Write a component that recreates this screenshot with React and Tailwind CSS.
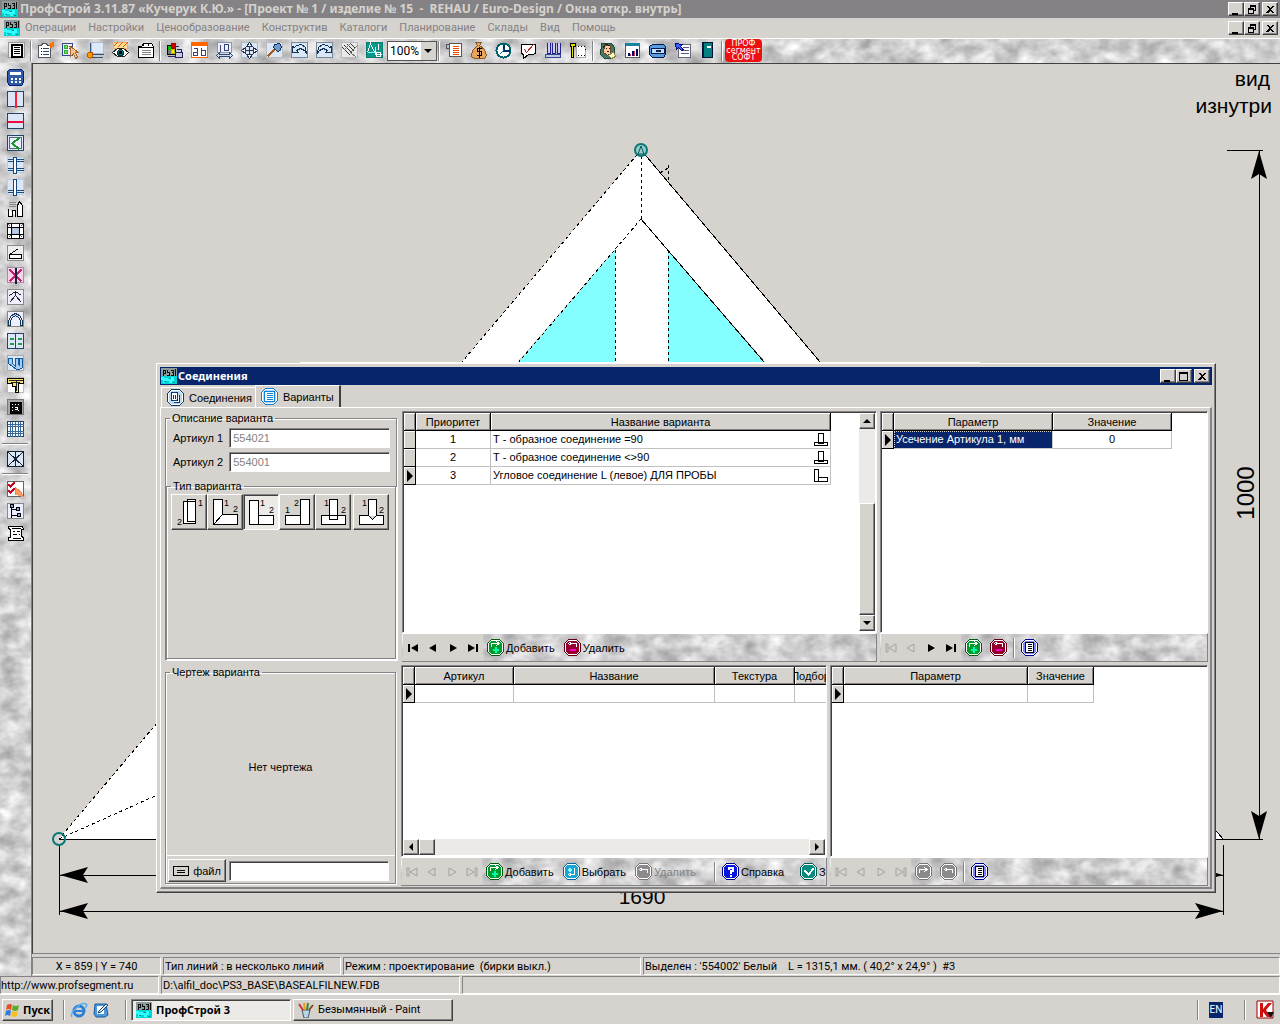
import React, { useState } from 'react';

const BOLD = 'font-bold font-["Noto_Sans","Open_Sans",sans-serif]';
const RAISED = 'border border-t-white border-l-white border-r-[#404040] border-b-[#404040] shadow-[inset_-1px_-1px_0_#848284] bg-[#d6d3ce]';
const SUNKEN = 'border border-t-[#848284] border-l-[#848284] border-r-white border-b-white shadow-[inset_1px_1px_0_#404040]';
const THIN = 'border border-t-[#848284] border-l-[#848284] border-r-white border-b-white';

const Ico = ({ children }) => (
    <svg viewBox="0 0 17 17" className="size-[17px] shrink-0" shapeRendering="crispEdges" aria-hidden="true">
        <g transform="translate(.5 .5)">{children}</g>
    </svg>
);

const P = ({ d, c = '#000', f = 'none', w = 1 }) => <path d={d} stroke={c} fill={f} strokeWidth={w} />;
const Box = ({ c = '#6b7fa3', f = '#dbe6f6' }) => <rect x="0" y="0" width="16" height="15" fill={f} stroke={c} />;

// Grey marble behind every toolbar
const Marble = () => (
    <svg className="absolute inset-0 w-full h-full pointer-events-none" aria-hidden="true">
        <rect width="100%" height="100%" filter="url(#marble)" />
    </svg>
);

const AppIcon = () => (
    <svg viewBox="0 0 16 16" className="size-4 shrink-0" shapeRendering="crispEdges" aria-hidden="true">
        <path d="M0 0h16v16H0z" fill="#00d5d5" />
        <path d="M0 0h16v8H0z" fill="#8c9c9c" />
        <path d="M2 8V2h2v3H2M7 2H6v2h2v3H6M10 2h2v2h-1M12 4v3h-2M14 1v7" stroke="#111" fill="none" />
        <path d="M0 9h3v1h4v1h3v-2h3v4h-2v2H8v-2H4v2H2v-3H0z" fill="#30ffff" />
        <path d="M3 13h2M8 10h2M12 14h2" stroke="#089090" />
    </svg>
);

const TOOLBAR = [
    { name: 'Меню', icon: <><Box c="#999" f="#eee" /><P d="M3 2h10v12H3z" f="#fff" w={2} /><P d="M5 5h6M5 7h6M5 9h6M5 11h6" /></> },
    null,
    { name: 'Свойства', icon: <><P d="M1 3h3l1-2h4l1 2h3v12H1z" c="#556" f="#fff" /><P d="M5 6h6M5 9h6M5 12h6" c="#346" /><P d="M3 6h1M3 9h1M3 12h1" /><P d="M13 1l3-1v4l-3 1z" c="#f60" f="#f80" /></> },
    { name: 'Выбор', icon: <><P d="M0 1h10v12H0z" c="#348" f="#eef" /><P d="M2 3h3v3H2zM2 8h3v3H2z" c="#3a3" f="#6d6" /><P d="M6 4h3M6 6h3" c="#348" /><P d="M8 4v10l3-3 2 5 2-1-2-5h3z" c="#a63" f="#ffc488" /></> },
    { name: 'Размеры', icon: <><P d="M4 0h12v11H4z" c="#abc" f="#dde8fa" /><P d="M3 0v12h13M5 12v3h10" c="#357" /><P d="M1 10h4v4l-2 2-3-2v-3z" c="#b50" f="#f90" /></> },
    { name: 'Просмотр', icon: <><P d="M1 0h14v6H1z" c="#fa6" f="#fd9" /><P d="M1 4l4-4M5 5l5-5M10 5l5-5" c="#d50" /><P d="M0 10l5-4h6l5 4-4 4H5z" c="#222" f="#fff" /><circle cx="8" cy="10" r="3" fill="#087070" stroke="#033" /><P d="M7 9h2v2H7z" f="#000" /></> },
    { name: 'Заметка', icon: <><P d="M1 4h3l2-3h8l2 3v11H1zM1 5h15M5 4l2-3M10 4l2-3" f="#fff" /><P d="M4 8h9M4 10h9M4 12h9" c="#888" /></> },
    null,
    { name: 'Цвета', icon: <><P d="M1 3h8v9H1z" f="#777" /><P d="M2 4h3v3H2z" c="#0b0" f="#0c0" /><P d="M5 1h4v5H5z" c="#a00" f="#c00" /><P d="M5 7h3v4H5z" c="#bb0" f="#ee0" /><P d="M9 4h3M9 10h7v5H9zM10 7h5v3M1 14h7" c="#226" f="#ccd" /></> },
    { name: 'Текст', icon: <><Box c="#f60" f="#fff" /><P d="M0 2h16" c="#f60" w={3} /><P d="M2 6h4v7H2v-3h4M10 5v8h4V8h-4" c="#347" /></> },
    { name: 'Число', icon: <><P d="M1 0h14v10H1z" c="#89a" f="#eef" /><P d="M4 2v7M8 2h4v6H8z" c="#347" /><P d="M0 13l3-3v2h10v-2l3 3-3 3v-2H3v2z" c="#347" f="#cde" /></> },
    { name: 'Переместить', icon: <><Box c="#abb" /><P d="M8 3v10M3 8h10" c="#235" /><P d="M8 0l3 4H5zM8 16l3-4H5zM0 8l4-3v6zM16 8l-4-3v6z" c="#235" f="#fff" /></> },
    { name: 'Кисть', icon: <><Box c="#bbb" /><P d="M1 14l8-8" c="#a75b18" w={2} /><P d="M8 2l5-1 2 3-1 4-3 1-4-4z" c="#036" f="#7399c8" /></> },
    { name: 'Отменить', icon: <><Box c="#789" /><P d="M1 4v6h6L5 8l4-2 4 2 2 3-1-6-4-3-5 1-2 2z" c="#135" f="#d6e8fa" /></> },
    { name: 'Вернуть', icon: <><Box c="#789" /><P d="M15 4v6H9l2-2-4-2-4 2-2 3 1-6 4-3 5 1 2 2z" c="#135" f="#d6e8fa" /></> },
    { name: 'Сетка', icon: <><Box c="#bbb" f="#e8e8e8" /><P d="M1 5l8 8M3 3l8 8M6 2l7 7M9 1l5 5" c="#333" /><P d="M2 8l7-7M9 10l7-7M9 10l6 5" c="#777" /></> },
    { name: 'Масштаб', icon: <><Box c="#087a70" f="#07988a" /><P d="M1 10l3-9 4 9M9 4v8h6M12 1v6M10 10h4v4h-4z" c="#fff" /><P d="M1 10h7" c="#8ff" /></> },
    'zoom',
    null,
    { name: 'Спецификация', icon: <><P d="M0 2h4v12h12V1H4v1" c="#555" f="#fff" /><P d="M1 2v4h3" c="#555" /><P d="M7 4h6M7 6h6M7 8h6M7 10h6M7 12h6" c="#e64c00" /></> },
    { name: 'Стоимость', icon: <><P d="M5 0l2 3-5 5-1 6 3 2h10l2-3-2-6-5-4 2-3z" c="#87592a" f="#e7a55a" /><P d="M11 6H7v3h4v4H6M9 4v11" /></> },
    { name: 'Время', icon: <><circle cx="8" cy="8" r="7" fill="#fff" stroke="#00616b" strokeWidth="2" /><P d="M8 2v6h6" c="#036" w={2} /><P d="M8 8l-4 4" c="#089" /></> },
    { name: 'Проверка', icon: <><P d="M1 2h14v9l-3 1H8l-5 4V12l-2-1z" f="#fff" /><P d="M4 7l2 3 7-8" c="#b22" /></> },
    { name: 'Раскрой', icon: <><P d="M0 12h15v3H0z" c="#349" f="#bcd" /><P d="M2 0v11h3V0M7 0v11h3V0M12 0v11h3V0" c="#228" f="#ccf" /></> },
    { name: 'План', icon: <><P d="M6 3h9v12H6z" c="#aaa" f="#fff" /><P d="M0 1h5v3H3v11H1V4H0z" f="#dede00" /><P d="M7 4h1M10 4h1M13 4h1M14 7h1M13 13h1M10 13h1M7 13h1" /></> },
    null,
    { name: 'Клиент', icon: <><P d="M2 1h10l3 4v9l-4 2H5l-4-4z" c="#243" f="#476" /><P d="M5 3h6v8l-3 2-4-3z" c="#643" f="#ffc99b" /><P d="M3 6l3-4 5 1M6 6h1M9 6h1M7 9h2" c="#221" /><P d="M9 13l5-4 2 5-4 2z" c="#884" f="#ffc" /></> },
    { name: 'Диаграмма', icon: <><P d="M1 1h14v14H1z" c="#555" f="#fff" /><P d="M1 2h14" c="#1684a0" w={3} /><P d="M4 13v-3M8 13V8M12 13V6" c="#00006a" w={2} /><P d="M6 13v-2M10 13V8" c="#d33" /></> },
    { name: 'Печать', icon: <><P d="M3 2h11l2 2v8l-2 3H3l-3-3V4z" c="#001b50" f="#5b9be0" /><P d="M2 6h13v5H2z" c="#001b50" f="#c0e0ff" /><P d="M6 8h5" c="#124" w={2} /></> },
    { name: 'Отчёт', icon: <><P d="M4 2h12v13H4z" c="#667" f="#fff" /><P d="M8 5h6M6 8h8M6 11h8" c="#558" /><P d="M1 1l7 1-2 2 3 3-2 1-3-3-2 2z" c="#008" f="#36f" /></> },
    { name: 'Справочник', icon: <><P d="M3 0h10v15H3z" c="#013" f="#008080" /><P d="M7 4h4" c="#fff" w={2} /><P d="M4 0v15" c="#023" /></> },
    null,
];

const SIDEBAR = [
    { name: 'Калькулятор', icon: <><P d="M2 0h12l2 2v11l-2 3H2l-2-3V2z" c="#002080" f="#315aa8" /><P d="M3 3h10v2H3z" c="#fff" f="#fff" /><P d="M3 9h2M7 9h2M11 9h2M3 12h2M7 12h2M11 12h2" c="#fff" w={2} /></> },
    { name: 'Вертикаль', icon: <><Box c="#246" /><path d="M7 0h2v16H7z" fill="#ff2038" /></> },
    { name: 'Горизонталь', icon: <><Box c="#246" /><path d="M0 7h16v2H0z" fill="#f00840" /></> },
    { name: 'Створка', icon: <><Box c="#246" /><P d="M2 2h12v11H2z" c="#567" f="#eef" /><P d="M12 2L5 8l7 6" c="#17992a" w={2} /></> },
    { name: 'Импост', icon: <><Box c="#bcd" /><P d="M0 2h16M0 4h16M0 11h16M0 13h16" c="#174a80" /><P d="M6 0h3v16H6z" c="#174a80" f="#fff" /></> },
    { name: 'Штульп', icon: <><Box c="#bcd" /><P d="M0 11h16M0 13h16" c="#174a80" /><P d="M6 0h3v16H6z" c="#174a80" f="#fff" /></> },
    { name: 'Арка', icon: <><P d="M1 1h7M1 3h7M1 5h7" c="#888" /><P d="M1 7v8h4V9h3v6M10 15V4l2-4 3 4v11z" f="#fff" /></> },
    { name: 'Рама', icon: <><Box c="#111" f="#fff" /><P d="M4 0v15M12 0v15M0 4h16M0 11h16" /><P d="M1 1l2 2M15 1l-2 2M1 14l2-2M15 14l-2-2" c="#666" /><P d="M5 5h6v5H5z" c="#abd" f="#bcd" /></> },
    { name: 'Наклон', icon: <><Box c="#888" f="#eee" /><P d="M2 9v4h12V9z" f="#fff" /><P d="M2 9l9-6" /></> },
    { name: 'Удалить импост', icon: <><Box c="#a8a" f="#f4d4e6" /><P d="M2 2l12 12M14 2L2 14" c="#c02078" w={2} /><P d="M8 0v16" c="#123" w={2} /></> },
    { name: 'Угол', icon: <><Box c="#888" f="#eef" /><P d="M2 13l6-7 6 7M2 6l6-4 6 4M8 2v4" c="#222" /></> },
    { name: 'Дуга', icon: <><Box c="#888" f="#eef" /><P d="M1 14V9l3-5 4-2 4 2 3 5v5h-2V9l-2-3-3-2-3 2-2 3v5z" c="#135" f="#dbe6f6" /></> },
    { name: 'Заполнение', icon: <><Box c="#246" /><P d="M8 0v15" c="#246" /><P d="M2 5h4M10 5h4M2 10h4M10 10h4" c="#289848" w={2} /></> },
    { name: 'Профили', icon: <><Box c="#aaa" /><P d="M1 3h4v5l3 3V3h3v5l1 2V3h3v9l-3 2H9L1 8z" c="#135a98" f="#a8ccf0" /></> },
    { name: 'Сечение', icon: <><Box c="#bbb" f="#fff" /><P d="M0 1h16v5h-5v9H8V9H5V6H0z" f="#f8e070" /><P d="M1 3h14M3 5h9M9 3v10" c="#222" /></> },
    { name: 'Растр', icon: <><Box c="#777" f="#a8a8a8" /><P d="M3 3h10v10H3z" f="#111" w={2} /><P d="M4 5h1M7 5h1M10 5h1M4 8h1M10 11h1M7 8h3v2H7M4 11h1" c="#fff" /></> },
    { name: 'Раскладка', icon: <><Box c="#246" f="#fff" /><P d="M0 3h16M0 5h16M0 10h16M0 12h16M3 0v15M5 0v15M8 0v15M11 0v15M13 0v15" c="#3a6a9c" /></> },
    null,
    { name: 'Диагонали', icon: <><Box c="#123" /><P d="M0 0l16 15M16 0L0 15M8 0v15" c="#123" /></> },
    null,
    { name: 'Список', icon: <><Box c="#666" f="#fff" /><P d="M1 3l2 2 4-4M1 9l2 2 4-4" c="#c02" w={2} /><P d="M8 13V6l6 5 2 5" c="#e84" f="#f96" /></> },
    { name: 'Дерево', icon: <><Box c="#888" f="#eef" /><P d="M4 3v11M4 6h5M4 12h6" /><P d="M3 1h3v3H3zM9 4h3v3H9zM10 10h3v3h-3z" f="#8ac" /></> },
    { name: 'Сценарий', icon: <><P d="M1 1h14l1 3h-2v7l2 1v3H1v-3h2V4L1 3z" f="#fff" /><P d="M5 6h2M9 6h3M5 9h4M11 9h1M4 3h9M5 13h8" /></> },
];

const MENU = ['Операции', 'Настройки', 'Ценообразование', 'Конструктив', 'Каталоги', 'Планирование', 'Склады', 'Вид', 'Помощь'];

const CAPTION = {
    min: 'M3 10h6v2H3z',
    restore: 'M5 2h6v6H9v3H3V5h2zM6 4v1h3v2h1V4zM4 7v3h4V7z',
    max: 'M2 2h9v9H2zM3 4v6h7V4z',
    close: 'M3 3h2l2 2 2-2h2L8 6l3 4H9L7 8l-2 2H3l3-4z',
};

const CaptionButtons = ({ kinds }) => (
    <div className="flex items-center ml-auto">
        {kinds.map((kind) => (
            <button key={kind} aria-label={kind} className={`w-4 h-[14px] flex items-center justify-center last:ml-[2px] ${RAISED}`}>
                <svg viewBox="0 0 14 13" className="w-[14px] h-[13px]" shapeRendering="crispEdges"><path d={CAPTION[kind]} fillRule="evenodd" /></svg>
            </button>
        ))}
    </div>
);

const Sep = () => <span className="w-[2px] h-5 mx-[2px] shrink-0 border-l border-l-[#848284] border-r border-r-white" />;

const Toolbar = () => (
    <div className="relative h-[25px] overflow-hidden border-t border-white">
        <Marble />
        <div className="relative flex items-center h-[23px] pl-1">
            {TOOLBAR.map((item, i) => {
                if (item === null) return <span key={i} className="w-[2px] h-5 mx-[1px] shrink-0 border-l border-l-[#848284] border-r border-r-white" />;
                if (item === 'zoom') {
                    return (
                        <select key={i} aria-label="Масштаб" className="appearance-none w-[50px] h-5 shrink-0 pl-[2px] text-[12px] leading-[16px] bg-white border border-[#555] bg-no-repeat bg-right bg-[linear-gradient(#d6d3ce,#d6d3ce)] bg-[length:15px_18px] text-black">
                            <option>100%</option>
                        </select>
                    );
                }
                return (
                    <button key={i} title={item.name} className="w-[25px] h-[22px] shrink-0 flex items-center justify-center">
                        <Ico>{item.icon}</Ico>
                    </button>
                );
            })}
            <div className="ml-[1px] w-[37px] h-[23px] rounded-[4px] bg-[#ee1010] text-white text-[8px] leading-[7px] text-center flex flex-col justify-center shrink-0 font-['DejaVu_Sans',sans-serif]">
                <span>ПРОФ</span><span>сегмент</span><span>СОФТ</span>
            </div>
        </div>
        <svg viewBox="0 0 8 4" className="absolute left-[424px] top-[10px] w-2 h-1 pointer-events-none"><path d="M0 0h8L4 4z" /></svg>
    </div>
);

const Drawing = () => (
    <svg viewBox="33 64 1247 800" preserveAspectRatio="xMinYMin meet" className="absolute inset-0 w-full h-full font-['Liberation_Sans',sans-serif]">
        <g shapeRendering="crispEdges" strokeWidth="1" stroke="#000" fill="none">
            <path d="M641 150L59 839H1223z M641 219L225 700H1060z" fill="#fff" stroke="none" fillRule="evenodd" />
            <path d="M615 219h53v150h-53z" fill="#fff" stroke="none" />
            <path d="M615 250V370H512zM668 250V370H771z" fill="#84ffff" stroke="none" />
            <path d="M641 150L59 839M641 219L512 370M641 150V219M615 250V370M668 250V370M59 839L155 796M668 165V182M660 173L668 168" strokeDasharray="3 3" />
            <path d="M641 150L1223 839M641 219L771 370M59 839H1223" />
            <path d="M59 845V915M1223 845V915M1227 150H1263M1223 839H1263M60 875H1223M60 911H1223M1259 150V839" />
            <path d="M300 362H980" stroke="#fff" />
        </g>
        <path d="M60 875l28-8-5 8 5 8zM1223 875l-28-8 5 8-5 8zM60 911l28-8-5 8 5 8zM1223 911l-28-8 5 8-5 8zM1259 151l-8 28 8-5 8 5zM1259 839l-8-28 8 5 8-5z" />
        <circle cx="59" cy="839" r="6" fill="none" stroke="#087878" strokeWidth="2" />
        <circle cx="641" cy="150" r="6" fill="#9cc" stroke="#087878" strokeWidth="2" />
        <path d="M638 154l3-8 3 8z" fill="none" stroke="#055" />
        <text x="1270" y="86" textAnchor="end" fontSize="21">вид</text>
        <text x="1272" y="113" textAnchor="end" fontSize="21">изнутри</text>
        <text x="642" y="904" textAnchor="middle" fontSize="21">1690</text>
        <text transform="translate(1254 493) rotate(-90)" textAnchor="middle" fontSize="24">1000</text>
    </svg>
);

// Small drawings of the profile joints, first and second article numbered
const JOINTS = [
    { d: 'M11 6h12v22H11zM15 4h8v22h-8z', one: [26, 11], two: [5, 30] },
    { d: 'M5 4h9v15h15v10H5zM5 29l9-10', one: [16, 11], two: [25, 17] },
    { d: 'M5 5h9v24H5zM14 20h15v9H14z', one: [16, 11], two: [25, 18] },
    { d: 'M20 4h9v25h-9zM5 20h15v9H5z', one: [5, 18], two: [14, 11] },
    { d: 'M5 20h24v9H5zM13 4h8v20h-8z', one: [8, 11], two: [25, 18] },
    { d: 'M5 20h9V4h8v16h7v9H5zM14 20l4 4 4-4', one: [8, 11], two: [25, 18] },
];

const NavButton = ({ kind, off }) => {
    const shapes = {
        first: 'M1 1h2v8H1zM11 1v8L4 5z',
        prev: 'M9 1v8L2 5z',
        next: 'M3 1v8l7-4z',
        last: 'M1 1v8l7-4zM9 1h2v8H9z',
    };
    return (
        <button aria-label={kind} disabled={off} className="w-5 h-[27px] shrink-0 flex items-center justify-center bg-[#d6d3ce]">
            <svg viewBox="0 0 12 10" className="w-3 h-[10px]">
                <path d={shapes[kind]} fill={off ? '#d6d3ce' : '#000'} stroke={off ? '#a5a29c' : 'none'} />
            </svg>
        </button>
    );
};

const BADGES = {
    add: { fill: '#009c29', edge: '#005a10', mark: <><P d="M4 7V4h7M9 2l3 2-3 2" c="#fff" /><P d="M8 7v6M5 10h6" c="#00ffb0" w={2} /></> },
    del: { fill: '#94002c', edge: '#5a0010', mark: <><P d="M12 7V4H5M7 2L4 4l3 2" c="#fff" /><P d="M6 10h5v1H6z" c="#f0c" f="#f0c" /></> },
    pick: { fill: '#18a5d6', edge: '#006a9c', mark: <><P d="M11 4v7H6M8 9l-3 2 3 2" c="#fff" /><P d="M6 4v4M4 6h4" c="#8ff" w={2} /></> },
    delOff: { fill: '#8c8a8c', edge: '#777', mark: <P d="M12 9V6H5M7 4L4 6l3 2" c="#fff" /> },
    addOff: { fill: '#8c8a8c', edge: '#777', mark: <P d="M4 9V6h7M9 4l3 2-3 2" c="#fff" /> },
    help: { fill: '#0818de', edge: '#000084', mark: <P d="M6 6V4h4v3H8v3M8 11v2" c="#fff" w={2} /> },
    ok: { fill: '#088c80', edge: '#005a52', mark: <P d="M4 7l4 4 5-6" c="#fff" w={2} /> },
    list: { fill: '#7b84ff', edge: '#000094', mark: <><P d="M4 3h8v10H4z" f="#fff" /><P d="M6 5h4M6 7h4M6 9h4M6 11h4" /></> },
    joint: { fill: '#bdd6ef', edge: '#083c73', mark: <><P d="M4 3h6v8H4zM6 13h6V5" c="#083c73" f="#fff" /><P d="M6 5v4M8 5v4" c="#083c73" /></> },
    variant: { fill: '#a8dcff', edge: '#1080d6', mark: <><P d="M3 3h10v10H3z" c="#1080d6" f="#fff" /><P d="M5 5h6M5 7h6M5 9h6M5 11h6" c="#1080d6" /></> },
};

const Badge = ({ kind }) => {
    const { fill, edge, mark } = BADGES[kind];
    return (
        <Ico>
            <path d="M4 0h8l4 4v8l-4 4H4l-4-4V4z" fill="#fff" stroke={edge} />
            <path d="M4 2h8l2 2v8l-2 2H4l-2-2V4z" fill={fill} stroke={fill} />
            {mark}
        </Ico>
    );
};

const BadgeButton = ({ kind, label, off }) => (
    <button aria-label={label || kind} disabled={off} className={`h-6 shrink-0 flex items-center gap-[2px] whitespace-nowrap ${off ? 'text-[#848284]' : ''}`}>
        <Badge kind={kind} />{label}
    </button>
);

const PanelBar = ({ children }) => (
    <div className="relative h-[29px] shrink-0 overflow-hidden border-t border-t-white border-b border-b-[#848284] border-r border-r-[#848284]">
        <Marble />
        <div className="relative flex items-center h-full pl-[1px]">{children}</div>
    </div>
);

const Th = ({ children }) => (
    <th className="h-[18px] p-0 font-normal bg-[#d6d3ce] border-r border-b border-black shadow-[inset_1px_1px_0_#fff,inset_-1px_-1px_0_#848284]">
        <div className="flex justify-center overflow-hidden whitespace-nowrap">{children}</div>
    </th>
);

const Mark = ({ current }) => (
    <td className="h-[18px] p-0 bg-[#d6d3ce] border-r border-b border-black shadow-[inset_1px_1px_0_#fff]">
        {current && <svg viewBox="0 0 6 12" className="w-[6px] h-3 ml-[3px]"><path d="M0 0l6 6-6 6z" /></svg>}
    </td>
);

const CELL = 'h-[18px] p-0 leading-[17px] border-r border-b border-[#c0c0c0] whitespace-nowrap';

const Grid = ({ cols, width, head, children }) => (
    <table className={`table-fixed border-separate border-spacing-0 shrink-0 self-start ${width}`}>
        <colgroup>{cols.map((c, i) => <col key={i} className={c} />)}</colgroup>
        <thead><tr><Th />{head.map((h) => <Th key={h}>{h}</Th>)}</tr></thead>
        <tbody>{children}</tbody>
    </table>
);

const ScrollArrow = ({ dir }) => {
    const d = { up: 'M0 6h8L4 2z', down: 'M0 2h8L4 6z', left: 'M6 0v8L2 4z', right: 'M2 0v8l4-4z' }[dir];
    return (
        <button aria-label={dir} className={`size-4 shrink-0 flex items-center justify-center ${RAISED}`}>
            <svg viewBox="0 0 8 8" className="size-2"><path d={d} /></svg>
        </button>
    );
};

const JointMini = ({ corner }) => (
    <svg viewBox="0 0 16 16" className="size-4 shrink-0" shapeRendering="crispEdges">
        <path transform="translate(.5 .5)" d={corner ? 'M1 1h4v12H1zM5 9h9v4H5z' : 'M1 10h13v3H1zM5 1h5v10H5z'} fill="#fff" stroke="#000" />
    </svg>
);

const VARIANTS = [
    { id: 1, name: 'Т - образное соединение =90' },
    { id: 2, name: 'Т - образное соединение <>90' },
    { id: 3, name: 'Угловое соединение L (левое) ДЛЯ ПРОБЫ', corner: true },
];

const GROUP = 'border border-[#848284] shadow-[1px_1px_0_#fff,inset_1px_1px_0_#fff] min-w-0';
const FIELD = `flex-1 min-w-0 h-5 px-[3px] bg-white text-[#848284] ${SUNKEN}`;

const ConnectionsDialog = () => {
    const [joint, setJoint] = useState(2);

    return (
        <section className={`absolute left-[123px] top-[299px] w-[1060px] h-[530px] p-[3px] flex flex-col text-[11px] leading-[14px] font-["Liberation_Sans",sans-serif] ${RAISED}`}>
            <header className={`h-[18px] shrink-0 flex items-center gap-[1px] pl-[1px] pr-[2px] bg-[#08246b] text-white ${BOLD}`}>
                <AppIcon />
                <h2>Соединения</h2>
                <CaptionButtons kinds={['min', 'max', 'close']} />
            </header>

            <div role="tablist" className="flex items-end h-[22px] shrink-0 pl-[1px]">
                <button role="tab" className="h-5 flex items-center gap-[5px] pl-[5px] pr-[3px] border-t border-l border-white">
                    <Badge kind="joint" />Соединения
                </button>
                <button role="tab" aria-selected="true" className="h-[22px] flex items-center gap-[5px] px-[5px] border-t border-l border-white border-r-2 border-r-[#404040]">
                    <Badge kind="variant" />Варианты
                </button>
            </div>

            <div className="flex-1 min-h-0 flex flex-col gap-[3px] pt-[3px] pb-[1px] pl-[2px] pr-[2px] border-t border-l border-white border-r-2 border-b-2 border-r-[#848284] border-b-[#848284]">
                <div className="h-[251px] shrink-0 flex gap-[3px]">
                    <div className="w-[236px] shrink-0 flex pb-[2px] px-[2px]">
                        <fieldset className={`flex-1 flex flex-col ${GROUP}`}>
                            <legend className="ml-1 px-[2px]">Описание варианта</legend>
                            <div className="h-[1px]" />
                            {[['Артикул 1', '554021'], ['Артикул 2', '554001']].map(([label, value]) => (
                                <label key={label} className="flex items-center gap-[6px] h-6 pl-[7px] pr-[6px]">
                                    {label}
                                    <input className={FIELD} defaultValue={value} />
                                </label>
                            ))}
                            <fieldset className={`flex-1 mt-[5px] ${GROUP}`}>
                                <legend className="ml-1 px-[2px]">Тип варианта</legend>
                                <div className="flex pl-1 pt-[1px]">
                                    {JOINTS.map((j, i) => (
                                        <button
                                            key={i}
                                            aria-label={`Тип ${i + 1}`}
                                            aria-pressed={joint === i}
                                            onClick={() => setJoint(i)}
                                            className={`size-9 shrink-0 last:ml-[2px] ${joint === i ? `bg-[#eceae7] ${SUNKEN}` : RAISED}`}
                                        >
                                            <svg viewBox="0 0 34 34" className="size-[34px]">
                                                <path transform="translate(.5 .5)" d={j.d} fill="#fff" stroke="#000" shapeRendering="crispEdges" />
                                                <text x={j.one[0]} y={j.one[1]} fontSize="9">1</text>
                                                <text x={j.two[0]} y={j.two[1]} fontSize="9">2</text>
                                            </svg>
                                        </button>
                                    ))}
                                </div>
                            </fieldset>
                        </fieldset>
                    </div>

                    <div className="flex-1 min-w-0 flex flex-col">
                        <div className={`flex-1 min-h-0 flex justify-between p-[1px] bg-white ${SUNKEN}`}>
                            <Grid width="w-[427px]" cols={['w-3', 'w-[75px]', 'w-[340px]']} head={['Приоритет', 'Название варианта']}>
                                {VARIANTS.map((v) => (
                                    <tr key={v.id}>
                                        <Mark current={v.id === 3} />
                                        <td className={`text-center ${CELL}`}>{v.id}</td>
                                        <td className={CELL}>
                                            <div className="flex items-center justify-between pl-[2px] pr-[1px] h-[17px]">{v.name}<JointMini corner={v.corner} /></div>
                                        </td>
                                    </tr>
                                ))}
                            </Grid>
                            <div className="w-4 flex flex-col bg-[#eceae7]">
                                <ScrollArrow dir="up" />
                                <div className="flex-1" />
                                <div className={`h-[112px] ${RAISED}`} />
                                <ScrollArrow dir="down" />
                            </div>
                        </div>
                        <PanelBar>
                            <div className="flex mr-1"><NavButton kind="first" /><NavButton kind="prev" /><NavButton kind="next" /><NavButton kind="last" /></div>
                            <div className="flex gap-[9px]"><BadgeButton kind="add" label="Добавить" /><BadgeButton kind="del" label="Удалить" /></div>
                        </PanelBar>
                    </div>

                    <div className="w-[328px] shrink-0 flex flex-col">
                        <div className={`flex-1 min-h-0 flex p-[1px] bg-white ${SUNKEN}`}>
                            <Grid width="w-[290px]" cols={['w-3', 'w-[159px]', 'w-[119px]']} head={['Параметр', 'Значение']}>
                                <tr>
                                    <Mark current />
                                    <td className={`pl-[2px]! bg-[#08246b] text-white outline-1 outline-dotted -outline-offset-1 outline-[#d6d3ce] ${CELL}`}>Усечение Артикула 1, мм</td>
                                    <td className={`text-center ${CELL}`}>0</td>
                                </tr>
                            </Grid>
                        </div>
                        <PanelBar>
                            <div className="flex mr-1"><NavButton kind="first" off /><NavButton kind="prev" off /><NavButton kind="next" /><NavButton kind="last" /></div>
                            <div className="flex gap-2"><BadgeButton kind="add" /><BadgeButton kind="del" /></div>
                            <span className="w-1" /><Sep /><span className="w-1" />
                            <BadgeButton kind="list" />
                        </PanelBar>
                    </div>
                </div>

                <div className="flex-1 min-h-0 flex gap-[3px]">
                    <div className="w-[235px] shrink-0 flex pb-[2px] px-[2px]">
                        <fieldset className={`flex-1 ${GROUP}`}>
                            <legend className="ml-1 px-[2px]">Чертеж варианта</legend>
                            <div className="flex flex-col h-[206px]">
                                <div className="flex-1 flex items-center justify-center">Нет чертежа</div>
                                <div className="flex items-center gap-[3px] h-[30px] pl-[2px] pr-[6px] border-t border-white">
                                    <button className={`w-[58px] h-[23px] flex items-center justify-center gap-1 ${RAISED}`}>
                                        <svg viewBox="0 0 16 10" className="w-4 h-[10px]" shapeRendering="crispEdges"><path d="M.5.5h15v9H.5zM4 4.5h8M4 6.5h8" fill="none" stroke="#000" /></svg>
                                        файл
                                    </button>
                                    <input aria-label="Файл чертежа" className={FIELD} />
                                </div>
                            </div>
                        </fieldset>
                    </div>

                    <div className="flex-1 min-w-0 flex flex-col">
                        <div className={`flex-1 min-h-0 flex flex-col justify-between p-[1px] bg-white overflow-hidden ${SUNKEN}`}>
                            <Grid width="w-[424px]" cols={['w-3', 'w-[99px]', 'w-[201px]', 'w-[80px]', 'w-[32px]']} head={['Артикул', 'Название', 'Текстура', 'Подбор']}>
                                <tr><Mark current /><td className={CELL} /><td className={CELL} /><td className={CELL} /><td className={CELL} /></tr>
                            </Grid>
                            <div className="flex h-4 bg-[#eceae7]">
                                <ScrollArrow dir="left" />
                                <div className={`w-4 ${RAISED}`} />
                                <div className="flex-1" />
                                <ScrollArrow dir="right" />
                            </div>
                        </div>
                        <PanelBar>
                            <div className="flex mr-1"><NavButton kind="first" off /><NavButton kind="prev" off /><NavButton kind="next" off /><NavButton kind="last" off /></div>
                            <div className="flex gap-[9px]"><BadgeButton kind="add" label="Добавить" /><BadgeButton kind="pick" label="Выбрать" /><BadgeButton kind="delOff" label="Удалить" off /></div>
                            <span className="w-4 shrink-0" /><Sep /><span className="w-1 shrink-0" />
                            <div className="flex gap-4 shrink-0"><BadgeButton kind="help" label="Справка" /><BadgeButton kind="ok" label="Закрыть" /></div>
                        </PanelBar>
                    </div>

                    <div className="w-[378px] shrink-0 flex flex-col">
                        <div className={`flex-1 min-h-0 flex p-[1px] bg-white ${SUNKEN}`}>
                            <Grid width="w-[262px]" cols={['w-3', 'w-[184px]', 'w-[66px]']} head={['Параметр', 'Значение']}>
                                <tr><Mark current /><td className={CELL} /><td className={CELL} /></tr>
                            </Grid>
                        </div>
                        <PanelBar>
                            <div className="flex mr-1"><NavButton kind="first" off /><NavButton kind="prev" off /><NavButton kind="next" off /><NavButton kind="last" off /></div>
                            <div className="flex gap-2"><BadgeButton kind="addOff" off /><BadgeButton kind="delOff" off /></div>
                            <span className="w-1" /><Sep /><span className="w-1" />
                            <BadgeButton kind="list" />
                        </PanelBar>
                    </div>
                </div>
            </div>
        </section>
    );
};

const App = () => (
    <div className="h-screen min-h-[640px] flex flex-col overflow-hidden bg-[#d6d3ce] text-black text-[11px] leading-[14px] font-[Roboto,'Noto_Sans',sans-serif]">
        <svg className="absolute size-0" aria-hidden="true">
            <filter id="marble" x="0" y="0" width="100%" height="100%" colorInterpolationFilters="sRGB">
                <feTurbulence type="fractalNoise" baseFrequency="0.05 0.07" numOctaves="3" seed="4" />
                <feColorMatrix values="0.5 0 0 0 0.57  0.5 0 0 0 0.565  0.5 0 0 0 0.57  0 0 0 0 1" />
            </filter>
        </svg>

        <header className={`h-[18px] shrink-0 flex items-center gap-[2px] px-[2px] bg-[#848284] text-[#d6d3ce] text-[12px] ${BOLD}`}>
            <AppIcon />
            <h1 className="whitespace-pre">ПрофСтрой 3.11.87 «Кучерук К.Ю.» - [Проект № 1 / изделие № 15  -  REHAU / Euro-Design / Окна откр. внутрь]</h1>
            <CaptionButtons kinds={['min', 'restore', 'close']} />
        </header>

        <nav className="h-5 shrink-0 flex items-center pl-1 pr-[2px] text-[#848284]">
            <AppIcon />
            <div className="flex gap-3 ml-[5px]">
                {MENU.map((m) => <button key={m}>{m}</button>)}
            </div>
            <CaptionButtons kinds={['min', 'restore', 'close']} />
        </nav>

        <Toolbar />

        <main className="flex-1 min-h-0 flex">
            <aside className="relative w-8 shrink-0 overflow-hidden border-r border-[#848284]">
                <Marble />
                <div className="relative flex flex-col pl-[2px] pt-[3px]">
                    {SIDEBAR.map((item, i) => (item
                        ? <button key={i} title={item.name} className="w-[26px] h-[22px] flex items-center justify-center"><Ico>{item.icon}</Ico></button>
                        : <span key={i} className="w-[26px] h-[2px] my-[3px] border-t border-t-[#848284] border-b border-b-white" />
                    ))}
                </div>
            </aside>

            <div className="flex-1 min-w-0 flex flex-col">
                <div className="relative flex-1 min-h-0 overflow-hidden border-t border-l border-[#404040] border-b border-b-[#848284]">
                    <Drawing />
                    <ConnectionsDialog />
                </div>
                <div className="h-[22px] shrink-0 flex gap-[2px] pt-[3px] pb-[1px] whitespace-pre">
                    <div className={`w-[129px] px-[2px] text-center leading-[17px] ${THIN}`}>X = 859 | Y = 740</div>
                    <div className={`w-[178px] px-[1px] leading-[17px] ${THIN}`}>Тип линий : в несколько линий</div>
                    <div className={`w-[298px] px-[1px] leading-[17px] ${THIN}`}>Режим : проектирование  (бирки выкл.)</div>
                    <div className={`flex-1 px-[1px] leading-[17px] ${THIN}`}>Выделен : '554002' Белый    L = 1315,1 мм. ( 40,2° x 24,9° )  #3</div>
                </div>
            </div>
        </main>

        <div className="h-[18px] shrink-0 flex gap-[2px]">
            <div className={`w-[159px] leading-[17px] ${THIN}`}><a href="http://www.profsegment.ru">http://www.profsegment.ru</a></div>
            <div className={`w-[299px] px-[1px] leading-[17px] ${THIN}`}>D:\alfil_doc\PS3_BASE\BASEALFILNEW.FDB</div>
            <div className={`flex-1 ${THIN}`} />
        </div>

        <footer className="h-[30px] shrink-0 flex items-center gap-[2px] pl-[2px] pr-1 border-t border-white">
            <button className={`w-[51px] h-[22px] flex items-center justify-center gap-[2px] ${BOLD} ${RAISED}`}>
                <svg viewBox="0 0 16 14" className="w-4 h-[14px] shrink-0">
                    <path d="M2 2q3-2 5 0l-1 5Q3 5 1 7z" fill="#e8501c" /><path d="M8 2q3 2 6 0l-1 5q-3 2-6 0z" fill="#5cab28" />
                    <path d="M1 8q3-2 5 0l-1 5Q2 11 0 13z" fill="#3478dc" /><path d="M7 8q3 2 6 0l-1 5q-3 2-6 0z" fill="#f8c020" />
                </svg>
                Пуск
            </button>
            <span className="w-1" /><Sep />
            <button aria-label="Internet Explorer" className="size-5 p-[1px]">
                <svg viewBox="0 0 18 18"><circle cx="9" cy="10" r="5" fill="none" stroke="#2a7fd4" strokeWidth="3" /><path d="M5 10h9" stroke="#2a7fd4" strokeWidth="2" /><path d="M2 16Q0 13 6 7t10-4q2 1-1 4" fill="none" stroke="#55aef0" strokeWidth="1.5" /></svg>
            </button>
            <button aria-label="Рабочий стол" className="size-5 p-[1px]">
                <svg viewBox="0 0 18 18"><path d="M3 3h11l2 11-3 2H4L2 13z" fill="#4b98dc" stroke="#1a5aa0" /><path d="M5 5h7v8H5z" fill="#fff" /><path d="M7 10l7-7 2 1-7 7-3 1z" fill="#dce8f4" stroke="#246" /></svg>
            </button>
            <span className="w-2" /><Sep />
            <button className={`w-[160px] h-[22px] flex items-center gap-1 pl-1 bg-[#eceae7] ${BOLD} ${SUNKEN}`}><AppIcon />ПрофСтрой 3</button>
            <button className={`w-[160px] h-[22px] flex items-center gap-1 pl-1 ${RAISED}`}>
                <svg viewBox="0 0 16 16" className="size-4"><path d="M4 8h8l-2 8H6z" fill="#b8d8e8" stroke="#456" /><path d="M5 8L1 2" stroke="#c33" strokeWidth="2" /><path d="M7 8L6 1" stroke="#e9a020" strokeWidth="2" /><path d="M9 8l1-7" stroke="#388a30" strokeWidth="2" /><path d="M11 8l4-5" stroke="#85462a" strokeWidth="2" /></svg>
                Безымянный - Paint
            </button>
            <div className="ml-auto flex items-center gap-2">
                <Sep />
                <span className="w-[14px] h-4 bg-[#08246b] text-white text-[10px] leading-4 text-center">EN</span>
                <span className="w-[3px]" /><Sep />
                <svg viewBox="0 0 20 20" className="size-5"><path d="M1 1h16v17H1z" fill="#fff" stroke="#900" /><path d="M4 3h3v6l5-6h4l-6 7 5 7h-4L7 12v5H4z" fill="#d01010" /><path d="M11 12h7l-3 6z" fill="#111" /></svg>
            </div>
        </footer>
    </div>
);

export default App;
